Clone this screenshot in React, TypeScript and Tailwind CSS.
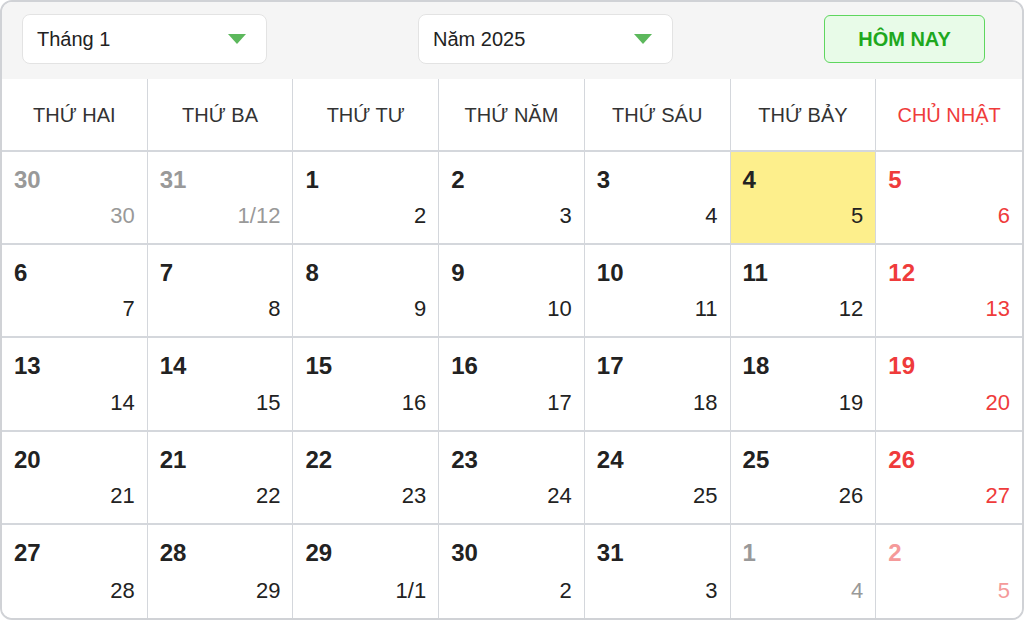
import { useState } from "react";

type Day = { solar: number; lunar: string; muted?: boolean; today?: boolean };

const weekdays = ["THỨ HAI", "THỨ BA", "THỨ TƯ", "THỨ NĂM", "THỨ SÁU", "THỨ BẢY", "CHỦ NHẬT"];

const weeks: Day[][] = [
  [
    { solar: 30, lunar: "30", muted: true },
    { solar: 31, lunar: "1/12", muted: true },
    { solar: 1, lunar: "2" },
    { solar: 2, lunar: "3" },
    { solar: 3, lunar: "4" },
    { solar: 4, lunar: "5", today: true },
    { solar: 5, lunar: "6" },
  ],
  [6, 7, 8, 9, 10, 11, 12].map((d) => ({ solar: d, lunar: String(d + 1) })),
  [13, 14, 15, 16, 17, 18, 19].map((d) => ({ solar: d, lunar: String(d + 1) })),
  [20, 21, 22, 23, 24, 25, 26].map((d) => ({ solar: d, lunar: String(d + 1) })),
  [
    { solar: 27, lunar: "28" },
    { solar: 28, lunar: "29" },
    { solar: 29, lunar: "1/1" },
    { solar: 30, lunar: "2" },
    { solar: 31, lunar: "3" },
    { solar: 1, lunar: "4", muted: true },
    { solar: 2, lunar: "5", muted: true },
  ],
];

function Caret() {
  return (
    <svg width="18" height="10" viewBox="0 0 18 10" className="shrink-0">
      <path d="M0 0 H18 L9 10 Z" fill="#5cb85c" />
    </svg>
  );
}

function Select({ label, width }: { label: string; width: string }) {
  return (
    <div
      className={`flex h-[50px] ${width} items-center justify-between rounded-lg border border-[#e3e3e3] bg-white pl-[14px] pr-[20px] text-[20px] text-[#222]`}
    >
      <span>{label}</span>
      <Caret />
    </div>
  );
}

function DayCell({ day, col }: { day: Day; col: number }) {
  const sunday = col === 6;
  let color = "text-[#222]";
  if (day.muted) color = sunday ? "text-[#f59a9a]" : "text-[#999]";
  else if (sunday) color = "text-[#ef3b3b]";

  return (
    <div
      className={`flex flex-col justify-between border-r border-[#d4d7dc] px-[12px] pb-[16px] pt-[16px] last:border-r-0 ${
        day.today ? "bg-[#fdef8c]" : "bg-white"
      } ${color}`}
    >
      <span className="text-[24px] font-bold leading-none">{day.solar}</span>
      <span className="self-end text-[22px] leading-none">{day.lunar}</span>
    </div>
  );
}

export default function App() {
  const [month] = useState(1);
  const [year] = useState(2025);

  return (
    <div className="h-[621px] w-[1024px] bg-white font-['Liberation_Sans',Arial,sans-serif]">
      <div className="flex h-[620px] w-[1024px] flex-col overflow-hidden rounded-xl border-2 border-[#d0d2d6] bg-white">
        <div className="flex h-[77px] shrink-0 items-start bg-[#f5f5f5] pl-[20px] pt-[12px]">
          <Select label={`Tháng ${month}`} width="w-[245px]" />
          <div className="ml-[151px]">
            <Select label={`Năm ${year}`} width="w-[255px]" />
          </div>
          <button className="ml-[151px] mt-[1px] h-[48px] w-[161px] rounded-md border border-[#5fd65f] bg-[#e8fbe8] text-[20px] font-bold text-[#1ea81e]">
            HÔM NAY
          </button>
        </div>

        <div className="grid h-[73px] shrink-0 grid-cols-7 border-b-2 border-[#d4d7dc]">
          {weekdays.map((w, i) => (
            <div
              key={w}
              className={`flex items-center justify-center border-r border-[#d4d7dc] text-[20px] last:border-r-0 ${
                i === 6 ? "text-[#ef3b3b]" : "text-[#333]"
              }`}
            >
              {w}
            </div>
          ))}
        </div>

        <div className="grid flex-1 grid-rows-5">
          {weeks.map((week, wi) => (
            <div
              key={wi}
              className="grid grid-cols-7 border-b-2 border-[#d4d7dc] last:border-b-0"
            >
              {week.map((day, di) => (
                <DayCell key={di} day={day} col={di} />
              ))}
            </div>
          ))}
        </div>
      </div>
    </div>
  );
}
